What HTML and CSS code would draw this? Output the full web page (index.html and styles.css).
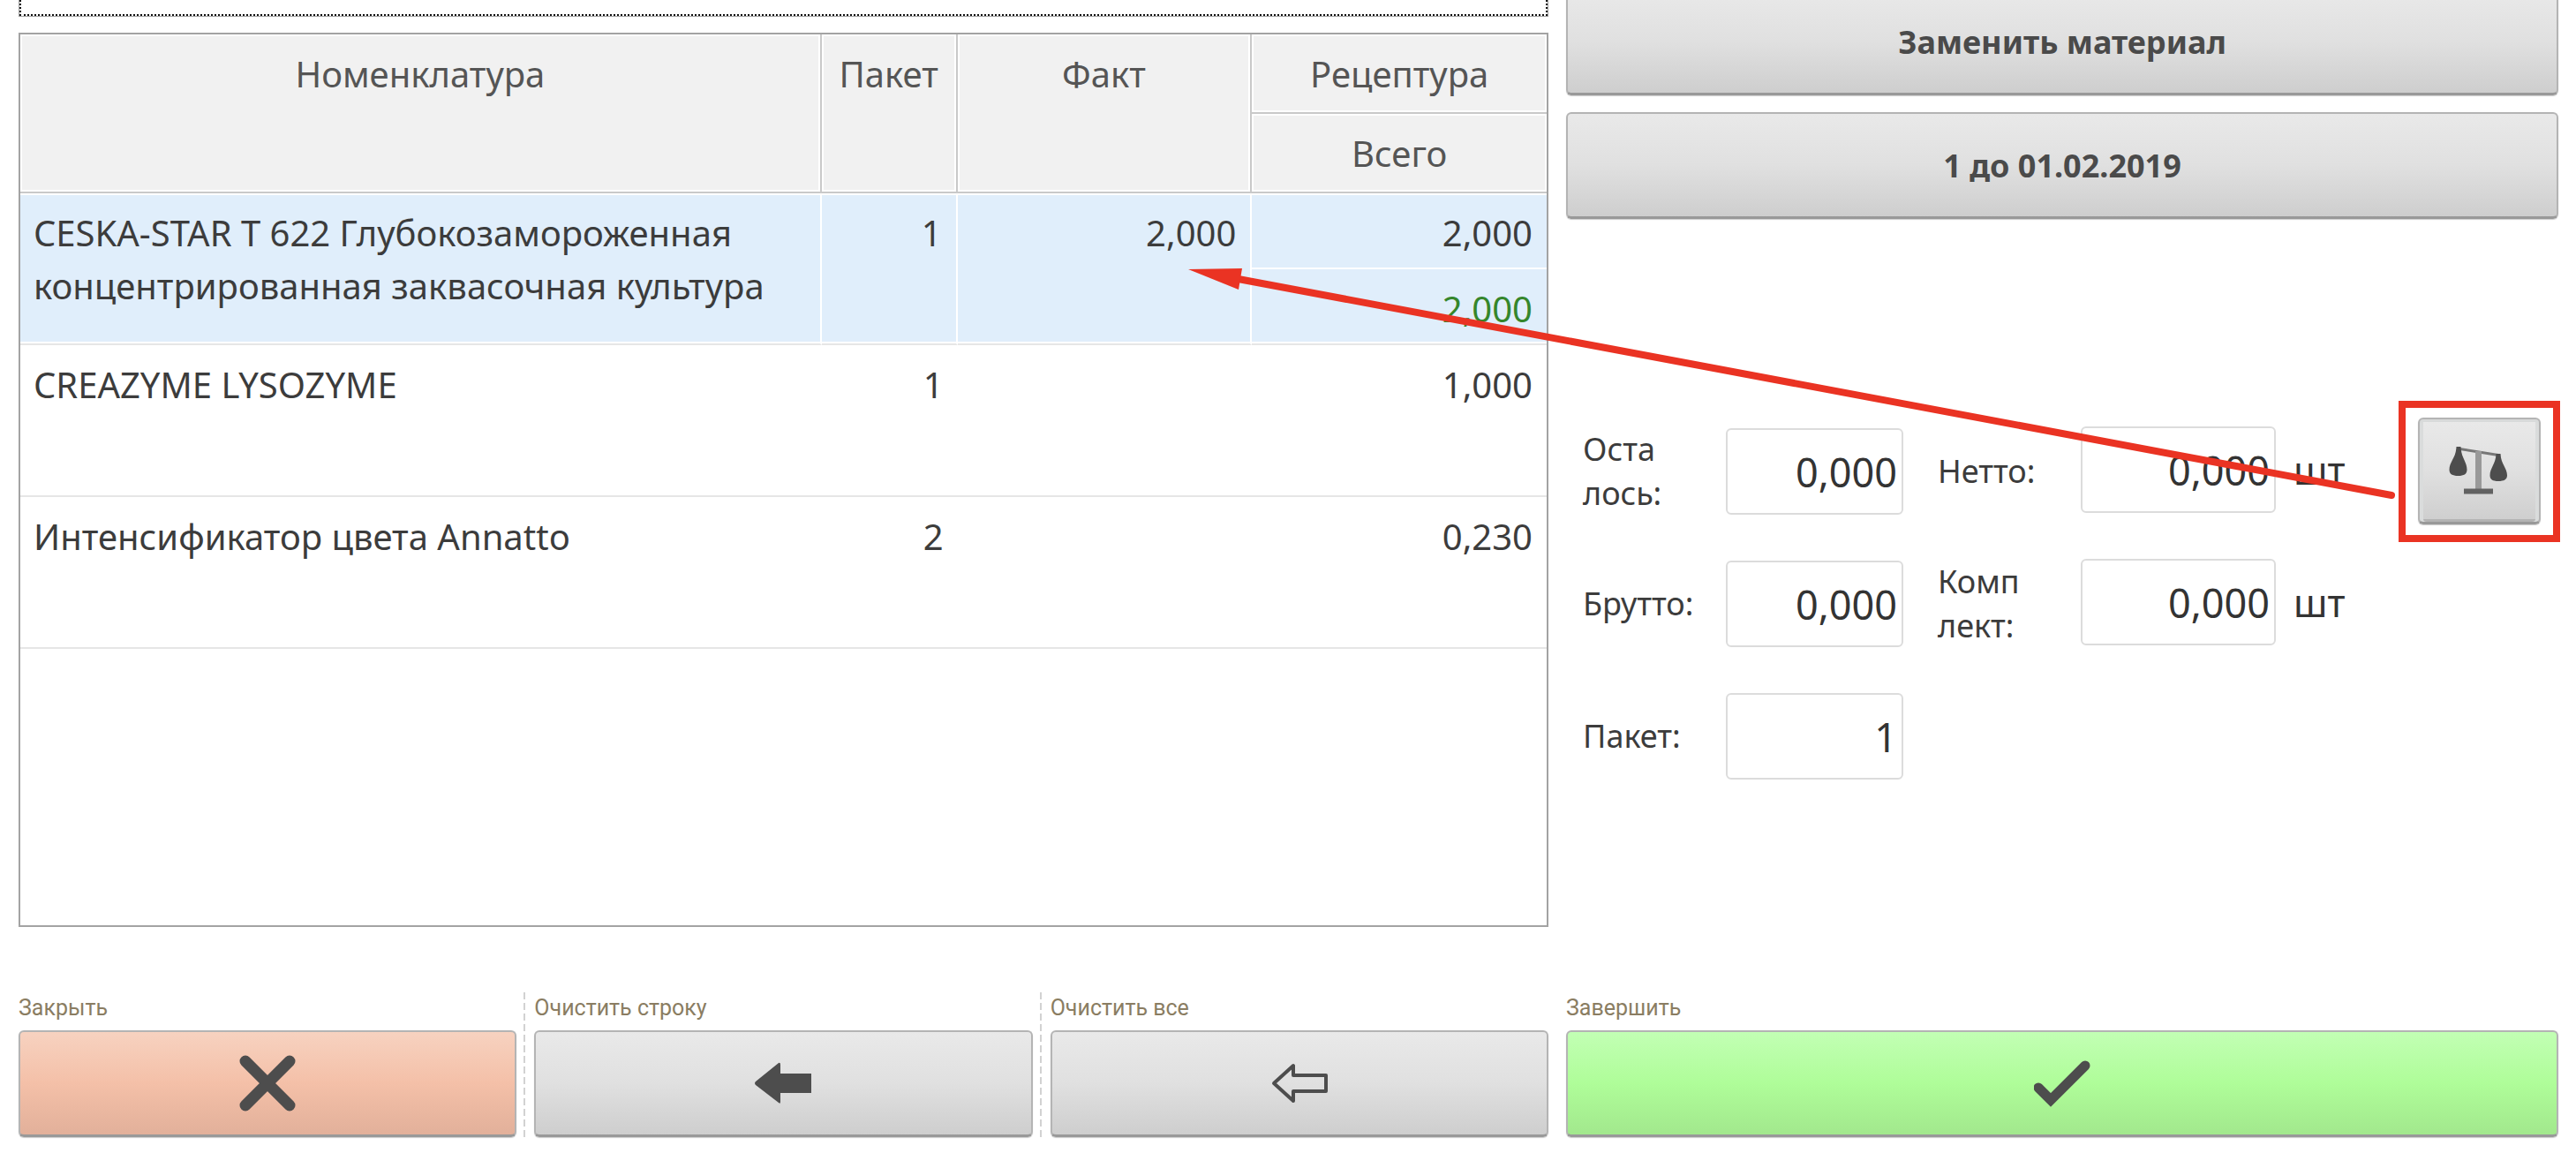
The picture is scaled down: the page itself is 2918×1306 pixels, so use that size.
FILE: index.html
```html
<!DOCTYPE html>
<html lang="ru">
<head>
<meta charset="utf-8">
<meta name="viewport" content="width=device-width, initial-scale=1">
<title>Номенклатура</title>
<link rel="stylesheet" href="styles.css">
</head>
<body>
<main class="columns work-area">
  <section class="list-pane">
    <div class="focus-box"><div class="focus-ring"></div></div>
    <div class="table-frame">
      <table class="items">
        <colgroup><col class="col-name"><col class="col-pack"><col class="col-fact"><col class="col-recipe"></colgroup>
        <thead>
          <tr><th rowspan="2">Номенклатура</th><th rowspan="2">Пакет</th><th rowspan="2">Факт</th><th>Рецептура</th></tr>
          <tr><th class="last">Всего</th></tr>
        </thead>
        <tbody>
          <tr class="selected"><td rowspan="2">CESKA-STAR T 622 Глубокозамороженная концентрированная заквасочная культура</td><td rowspan="2" class="num">1</td><td rowspan="2" class="num">2,000</td><td class="num upper">2,000</td></tr>
          <tr class="selected"><td class="num total">2,000</td></tr>
          <tr class="plain"><td>CREAZYME LYSOZYME</td><td class="num">1</td><td></td><td class="num">1,000</td></tr>
          <tr class="plain"><td>Интенсификатор цвета Annatto</td><td class="num">2</td><td></td><td class="num">0,230</td></tr>
        </tbody>
      </table>
    </div>
  </section>

  <section class="detail-pane">
    <button class="btn" type="button">Заменить материал</button>
    <button class="btn" type="button">1 до 01.02.2019</button>
    <form class="weights">
      <label for="left">Оста<br>лось:</label>
      <input id="left" class="low" type="text" value="0,000">
      <label class="second" for="net">Нетто:</label>
      <input id="net" class="high" type="text" value="0,000">
      <span class="unit">шт</span>
      <button class="btn scale" type="button" aria-label="Весы">
        <svg width="70" height="60" viewBox="0 0 70 60" aria-hidden="true">
          <path d="M9 5 56 12.500" stroke="#777" stroke-width="3"/>
          <path d="M33.500 8V51" stroke="#999" stroke-width="7"/>
          <path d="M17 50.500H50V56.500H17z" fill="#626262"/>
          <path d="M8.500 3H13.500C14 16 20.500 20 20.500 29 20.500 34 17 36 10.500 36S.5 34 .5 29C.5 20 8 16 8.500 3z" fill="#4d4d4d"/>
          <path d="M53.500 11H58.500C59 23 66 27 66 35.500 66 40 62.500 42 56 42S46.500 40 46.500 35.500C46.500 27 53 23 53.500 11z" fill="#4d4d4d"/>
        </svg>
      </button>
      <label for="gross">Брутто:</label>
      <input id="gross" class="low" type="text" value="0,000">
      <label class="second" for="kit">Комп<br>лект:</label>
      <input id="kit" class="high" type="text" value="0,000">
      <span class="unit row-end">шт</span>
      <label for="pack">Пакет:</label>
      <input id="pack" class="low" type="text" value="1">
    </form>
  </section>
</main>

<footer class="columns">
  <div class="actions">
    <div class="action">
      <label for="close">Закрыть</label>
      <button id="close" class="btn danger" type="button">
        <svg width="64" height="64" viewBox="0 0 64 64" aria-hidden="true"><path d="M7 7 57 57M57 7 7 57" stroke="#4d4d4d" stroke-width="13" stroke-linecap="round"/></svg>
      </button>
    </div>
    <div class="action divided">
      <label for="clear-row">Очистить строку</label>
      <button id="clear-row" class="btn" type="button">
        <svg width="64" height="64" viewBox="0 0 64 64" aria-hidden="true"><path d="M1 30 27 9Q29 8 29 11V21H64V43H29V53Q29 56 27 54L1 34Q-1 32 1 30z" fill="#4d4d4d"/></svg>
      </button>
    </div>
    <div class="action divided">
      <label for="clear-all">Очистить все</label>
      <button id="clear-all" class="btn" type="button">
        <svg width="64" height="64" viewBox="0 0 64 64" aria-hidden="true"><path d="M3 32 25 12V23H62V41H25V52z" fill="none" stroke="#4d4d4d" stroke-width="4" stroke-linejoin="round"/></svg>
      </button>
    </div>
  </div>
  <div class="action">
    <label for="finish">Завершить</label>
    <button id="finish" class="btn success" type="button">
      <svg width="64" height="64" viewBox="0 0 64 64" aria-hidden="true"><path d="M5 37 19 51 58 12" fill="none" stroke="#4d4d4d" stroke-width="11" stroke-linecap="round"/></svg>
    </button>
  </div>
</footer>

<svg class="callout" viewBox="0 0 2918 1306" aria-hidden="true">
  <rect x="2721" y="458" width="175" height="152" fill="none" stroke="#ea3323" stroke-width="8"/>
  <path d="M1400 315.500 2709 561" stroke="#ea3323" stroke-width="8" stroke-linecap="round"/>
  <path d="M1346 305 1407 304 1403 328z" fill="#ea3323"/>
</svg>
</body>
</html>
```
FILE: styles.css
```css
* { box-sizing: border-box; }

body {
  position: relative;
  display: flex;
  flex-direction: column;
  min-height: 100vh;
  margin: 0;
  padding: 0 20px 18px 21px;
  background: #fff;
  color: #3c3c3c;
  font-family: "Noto Sans", "Open Sans", sans-serif;
  font-size: 40px;
  line-height: 60px;
}

.columns {
  display: grid;
  grid-template-columns: 1733fr 1124fr;
  column-gap: 20px;
}

.work-area { flex: 1; margin-bottom: 74px; }

/* Item list */
.list-pane { display: flex; flex-direction: column; gap: 18px; }

.focus-box {
  height: 19px;
  border: solid #a0a0a0;
  border-width: 0 1px 1px;
}
.focus-ring {
  height: 18px;
  border: dotted #111;
  border-width: 0 2px 2px;
}

.table-frame { flex: 1; border: 2px solid #a3a3a3; }

.items {
  width: 100%;
  table-layout: fixed;
  border-collapse: separate;
  border-spacing: 0;
}
.col-name { width: 52.5%; }
.col-pack { width: 8.9%; }
.col-fact { width: 19.3%; }
.col-recipe { width: 19.3%; }

.items th, .items td {
  height: 86px;
  padding: 15px 15px 9px;
  vertical-align: top;
  text-align: left;
  border: 0 solid #e6e6e6;
  border-bottom-width: 2px;
}
.items th {
  height: 90px;
  background: #f1f1f1;
  color: #555;
  font-weight: 400;
  text-align: center;
  border-color: #c9c9c9;
  border-right-width: 2px;
  box-shadow: inset 0 0 0 2px #fff;
}
.items th:last-child { border-right-width: 0; }
.items tr:first-child th:not(:last-child) { border-right-width: 2px; }
.items .selected td {
  background: #e0eefb;
  border-right: 2px solid #fff;
  box-shadow: inset 0 2px #fff, inset 0 -2px #fff;
}
.items .selected td:last-child { border-right-width: 0; }
.items .selected .upper {
  border-bottom-color: #fff;
  box-shadow: inset 0 2px #fff;
}
.items .selected .total {
  color: #35862b;
  box-shadow: inset 0 -2px #fff;
}
.items .plain td { height: 172px; }
.items td.num { padding-right: 16px; text-align: right; }

/* Buttons */
.btn {
  display: flex;
  align-items: center;
  justify-content: center;
  width: 100%;
  height: 121px;
  padding: 0;
  border: 2px solid #b4b4b4;
  border-bottom: 3px solid #999;
  border-radius: 6px;
  background: linear-gradient(#e9e9e9, #e0e0e0 50%, #cecece);
  box-shadow: 0 1px 1px #ccc;
  color: #4a4a4a;
  font: 700 36px "Noto Sans", "Open Sans", sans-serif;
}
.btn svg { display: block; }
.danger { background: linear-gradient(#f7d2c0, #f4c0a8 50%, #e2b09a); }
.success { background: linear-gradient(#c2ffb4, #affd99 50%, #a2e88d); }

/* Weighing form */
.detail-pane {
  display: flex;
  flex-direction: column;
  gap: 19px;
  margin-top: -13px;
}

.weights {
  display: grid;
  grid-template-columns: 162fr 201fr 201fr 221fr 161fr 139fr;
  grid-auto-rows: 100px;
  row-gap: 50px;
  align-items: center;
  margin: 216px 20px 0 19px;
  font-size: 36px;
  line-height: 50px;
}
.weights label { padding-top: 2px; }
.weights .second { padding-left: 39px; }
.weights input {
  width: 100%;
  height: 98px;
  padding: 0 5px 0 0;
  border: 2px solid #dcdcdc;
  border-radius: 6px;
  background: #fff;
  color: #333;
  font: 45px "Noto Sans", "Open Sans", sans-serif;
  text-align: right;
}
.weights .low { align-self: end; }
.weights .high { align-self: start; }
.unit { padding-left: 20px; color: #333; font-size: 43px; }
.row-end { grid-column: 5 / 7; }
.scale {
  box-shadow: inset 0 3px #d8dada, inset 4px 0 #dadcdc, inset -4px 0 #dadcdc, inset 0 -3px #b4b4b4, 0 1px 1px #ccc;
}

/* Bottom actions */
.actions {
  display: grid;
  grid-template-columns: repeat(3, 1fr);
  column-gap: 20px;
}
.action { position: relative; }
.action label {
  display: block;
  margin-bottom: 7px;
  color: #8a7d62;
  font: 25px/36px Roboto, sans-serif;
}
.divided::before {
  content: "";
  position: absolute;
  top: 0;
  bottom: 0;
  left: -12px;
  width: 2px;
  background: repeating-linear-gradient(#d2d2d2 0 8px, #fff 8px 12px);
}

/* Arrow from the scale button to the weighed amount */
.callout {
  position: absolute;
  top: 0;
  left: 0;
  width: 100%;
  pointer-events: none;
}
```
